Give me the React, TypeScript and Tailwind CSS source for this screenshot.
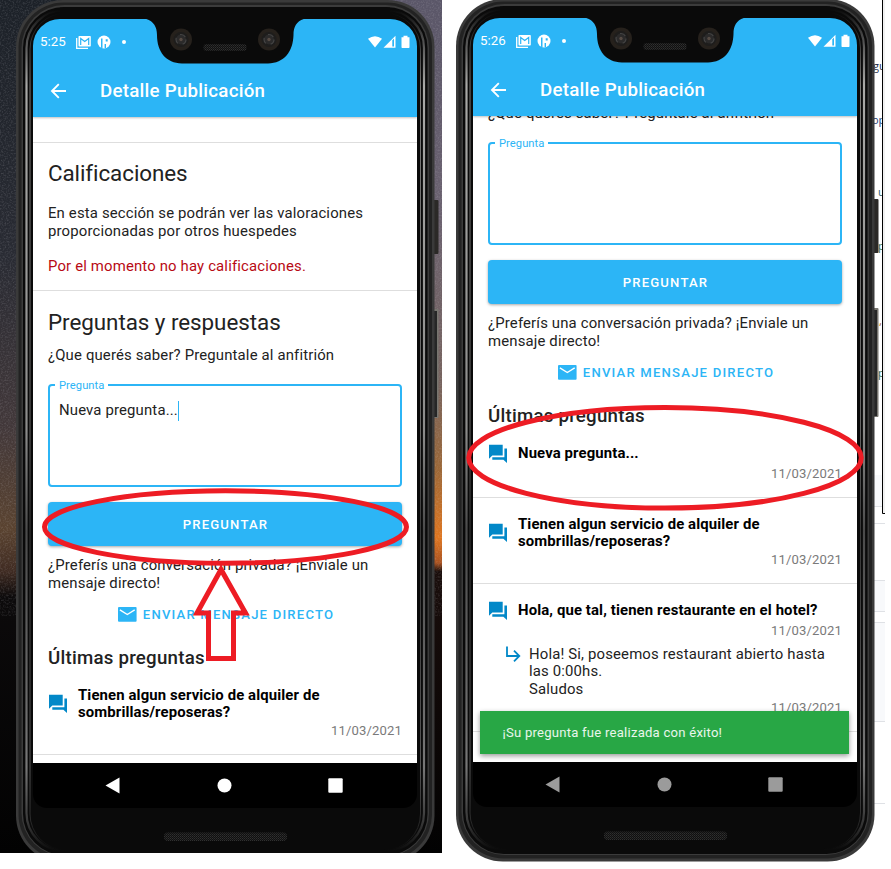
import type { ReactNode } from "react";

/* Phone body: bezel, notch hardware and side keys */
function Bezel({ id }: { id: string }) {
  return (
    <svg className="absolute inset-0" width="424" height="863" viewBox="0 0 424 863" aria-hidden="true">
      <defs>
        <linearGradient id={`${id}-silver`} x1="0" y1="0" x2="0" y2="1">
          <stop offset="0" stopColor="#0a0a0a" />
          <stop offset="0.03" stopColor="#444" />
          <stop offset="0.09" stopColor="#a9a9a7" />
          <stop offset="0.5" stopColor="#8c8c8b" />
          <stop offset="0.62" stopColor="#4b4b4b" />
          <stop offset="0.9" stopColor="#777" />
          <stop offset="0.97" stopColor="#333" />
          <stop offset="1" stopColor="#0a0a0a" />
        </linearGradient>
        <pattern id={`${id}-mesh`} width="2" height="2" patternUnits="userSpaceOnUse">
          <rect width="2" height="2" fill="#101010" />
          <rect width="1" height="1" fill="#303030" />
          <rect x="1" y="1" width="1" height="1" fill="#242424" />
        </pattern>
      </defs>
      <rect x="417" y="200" width="5.5" height="54" rx="1" fill="#2b2927" />
      <rect x="417" y="309" width="5.5" height="109" rx="1" fill="#77756f" />
      <rect x="417" y="311" width="4" height="106" fill="#262626" />
      <rect x="0" y="0" width="418.5" height="862.5" rx="47" fill="#3a3a3a" />
      <rect x="2.5" y="2.5" width="413.5" height="857" rx="45" fill="#222" />
      <rect x="5.5" y="5" width="407.5" height="851" rx="43" fill="#3b3b3b" />
      <rect x="7" y="7" width="404.5" height="848" rx="41" fill="#0a0a0a" />
      <rect x="10.5" y="10" width="397.5" height="841" rx="38" fill="none" stroke={`url(#${id}-silver)`} strokeWidth="2.2" />
      <rect x="14" y="13" width="390.5" height="837" rx="36" fill="#0a0a0a" stroke={`url(#${id}-silver)`} strokeWidth="0.7" />
      <rect x="44" y="7.5" width="330" height="8" fill="#0a0a0a" />
      <rect x="50" y="846" width="318" height="8" fill="#0a0a0a" />
      <rect x="148" y="832.5" width="123" height="8.5" rx="4" fill={`url(#${id}-mesh)`} />
    </svg>
  );
}

function Notch({ id }: { id: string }) {
  return (
    <svg className="absolute left-0 top-0" width="384" height="50" viewBox="0 0 384 50" aria-hidden="true">
      <path d="M108 -1 C119 0 124 6 124 16 C124 33 133 44 149 44.5 H235 C251 44 260 33 260.5 16 C260.5 6 265 0 276 -1 Z" fill="#0a0a0a" />
      {[148, 236].map((x) => (
        <g key={x}>
          <circle cx={x} cy="20.5" r="11" fill="#26211c" />
          <circle cx={x} cy="20.5" r="7.5" fill="#1e1d1c" />
          <circle cx={x} cy="20.5" r="5" fill="#2b2a2a" stroke="#454545" strokeWidth="1.2" strokeDasharray="6 5" />
          <circle cx={x} cy="20.5" r="1.7" fill="#564b44" />
        </g>
      ))}
      <rect x="170.5" y="25" width="43" height="7" rx="3" fill={`url(#${id}-mesh)`} />
    </svg>
  );
}

function StatusBar({ time }: { time: string }) {
  return (
    <div className="flex h-[46px] items-center pl-[7px] pr-[7px] text-white">
      <span className="w-[35.5px] text-[13.3px] leading-4">{time}</span>
      <svg width="15" height="13" viewBox="0 0 15 13">
        <path d="M0.7 2V12.300H12" fill="none" stroke="currentColor" strokeWidth="1.3" />
        <rect x="2.500" y="0" width="12.3" height="10.5" rx="0.8" fill="currentColor" />
        <path d="M4.7 9V2.500L8.700 5.500L12.700 2.500V9" fill="none" stroke="#2cb5f6" strokeWidth="1.2" />
      </svg>
      <svg className="ml-[6px]" width="14" height="14" viewBox="0 0 14 14">
        <circle cx="7" cy="7" r="6.500" fill="currentColor" />
        <path d="M4 3.500H5.500V13.200L4 12.700Z M8.700 4.300H10.700V6.500H8.700Z M7.600 9H9V13H7.600Z" fill="#2cb5f6" />
      </svg>
      <span className="ml-[11px] size-1 rounded-full bg-white" />
      <svg className="ml-auto" width="42" height="14" viewBox="0 0 42 14">
        <path d="M0 3.800Q7 -1.500 14 3.800L7 12.500Z" fill="currentColor" />
        <path d="M15.500 12.700L27.500 0.700V12.700Z" fill="currentColor" />
        <path d="M24.300 5.500V11.500H26V3.500Z" fill="#2cb5f6" />
        <path d="M33.500 2.200H35.500V0.700H39.500V2.200H41.500V12.200Q41.500 13 40.700 13H34.300Q33.500 13 33.500 12.200Z" fill="currentColor" />
      </svg>
    </div>
  );
}

function BackIcon() {
  return (
    <svg width="16" height="16" viewBox="0 0 16 16" fill="none" stroke="currentColor" strokeWidth="1.9" aria-hidden="true">
      <path d="M16 8H2.500M8.800 1.200L2 8L8.800 14.800" />
    </svg>
  );
}

function MailIcon() {
  return (
    <svg width="19" height="15" viewBox="0 0 19 15" aria-hidden="true">
      <rect width="18.600" height="14.800" rx="1" fill="currentColor" />
      <path d="M1.900 2.900L9.300 7.500L16.700 2.900" fill="none" stroke="#fff" strokeWidth="1.4" />
    </svg>
  );
}

function ForumIcon() {
  return (
    <svg width="20" height="20" viewBox="0 0 20 20" className="mr-px mt-[-1px] shrink-0 text-[#0288c8]" fill="currentColor" aria-hidden="true">
      <path d="M1 0.800H14.700V11.500H4.300L1 14.800Z M16.400 4.500H19V19L15.400 15.700H4.300V13.300H16.400Z" />
    </svg>
  );
}

function ReplyIcon() {
  return (
    <svg width="16" height="18" viewBox="0 0 16 18" fill="none" stroke="#0288c8" strokeWidth="1.8" aria-hidden="true">
      <path d="M2 0.500V10H14.500M9 4.700L14.300 10L9 15.300" />
    </svg>
  );
}

function Divider() {
  return <div className="h-px bg-[#dedede]" />;
}

function Ask({ value }: { value?: string }) {
  return (
    <section className="px-[15px]">
      <h2 className="pt-[18px] text-[22.4px] leading-[26px] tracking-[-0.002em]">Preguntas y respuestas</h2>
      <p className="mt-[12px]">¿Que querés saber? Preguntale al anfitrión</p>
      <div className="relative mt-[19px] h-[103px] w-[354px] rounded-[4px] border-2 border-[#2cb5f6] px-[9px] pt-[15px]">
        <span className="absolute left-[5px] top-[-9px] bg-white px-[4px] text-[11.2px] leading-[18px] tracking-[0.004em] text-[#2cb5f6]">Pregunta</span>
        {value && (
          <p className="flex items-center">
            {value}
            <span className="h-[20px] w-[1.5px] bg-[#2cb5f6]" />
          </p>
        )}
      </div>
      <button className="mt-[15px] flex h-[44px] w-[354px] items-center justify-center rounded-[4px] bg-[#2cb5f6] pl-px pt-[2px] text-[13.1px] font-medium tracking-[0.089em] text-white shadow-[0_1px_3px_rgba(0,0,0,0.35)]">
        PREGUNTAR
      </button>
      <p className="mt-[11.5px] w-[354px]">¿Preferís una conversación privada? ¡Enviale un mensaje directo!</p>
      <button className="mt-[12.5px] flex h-[20px] w-[354px] items-center justify-center gap-[6px] pl-[2px] text-[13.1px] font-medium tracking-[0.092em] text-[#2cb5f6]">
        <MailIcon />
        ENVIAR MENSAJE DIRECTO
      </button>
      <h3 className="mt-[22px] text-[18.7px] font-medium leading-[22px] tracking-[0.0125em]">Últimas preguntas</h3>
    </section>
  );
}

type QuestionProps = { text: string; date: string; rowClass: string; reply?: ReactNode };

function Question({ text, date, rowClass, reply }: QuestionProps) {
  return (
    <div>
      <div className={rowClass}>
        <ForumIcon />
        <p className="w-[300px] font-bold tracking-[0.008em] text-black">{text}</p>
      </div>
      <QuestionDate date={date} />
      {reply}
    </div>
  );
}

function QuestionDate({ date }: { date: string }) {
  return <p className="pr-[15px] text-right text-[13.1px] leading-4 tracking-[0.011em] text-[#7a7a7a]">{date}</p>;
}

type PhoneProps = { id: string; time: string; children: ReactNode; navColor: string; className: string };

function Phone({ id, time, children, navColor, className }: PhoneProps) {
  return (
    <div className={className}>
      <Bezel id={id} />
      <div className="relative ml-[17px] mt-[19px] flex h-[789px] w-[384px] flex-col overflow-hidden rounded-t-[27px] rounded-b-[14px] bg-black">
        <header className="relative z-10 h-[98px] shrink-0 bg-[#2cb5f6] shadow-[0_1px_2px_rgba(0,0,0,0.25)]">
          <StatusBar time={time} />
          <div className="flex h-[52px] items-center pl-[17px] text-white">
            <BackIcon />
            <h1 className="ml-[34px] text-[18.7px] font-medium tracking-[0.0135em]">Detalle Publicación</h1>
          </div>
          <Notch id={id} />
        </header>
        <main className="relative h-[646px] shrink-0 overflow-hidden bg-white text-[14.9px] leading-[17.5px] tracking-[0.0105em] text-[#222]">{children}</main>
        <nav className="flex h-[45px] items-center pl-[72px]">
          <svg width="240" height="20" viewBox="0 0 240 20" className={navColor} fill="currentColor">
            <path d="M0.500 9.500L14.500 1.500V17.500Z" />
            <circle cx="119.500" cy="9.500" r="7" />
            <rect x="223.300" y="2.300" width="14.400" height="14.400" rx="1" />
          </svg>
        </nav>
      </div>
    </div>
  );
}

/* Night-to-sunset photograph behind the first phone */
function SunsetBackdrop() {
  return (
    <svg className="absolute inset-0" width="442" height="853" aria-hidden="true">
      <defs>
        <linearGradient id="dusk" x1="0" y1="0" x2="0" y2="1">
          <stop offset="0" stopColor="#1c2128" />
          <stop offset="0.3" stopColor="#292b33" />
          <stop offset="0.5" stopColor="#42383a" />
          <stop offset="0.62" stopColor="#5a4330" />
          <stop offset="0.67" stopColor="#3f2b22" />
          <stop offset="0.7" stopColor="#0c0a0b" />
          <stop offset="1" stopColor="#020202" />
        </linearGradient>
        <linearGradient id="glow" x1="0" y1="0" x2="0" y2="1">
          <stop offset="0" stopColor="#5a5668" />
          <stop offset="0.25" stopColor="#6b6270" />
          <stop offset="0.45" stopColor="#76635e" />
          <stop offset="0.55" stopColor="#9c6838" />
          <stop offset="0.63" stopColor="#df7620" />
          <stop offset="0.66" stopColor="#a95322" />
          <stop offset="0.67" stopColor="#1a0e0c" />
          <stop offset="1" stopColor="#020202" />
        </linearGradient>
        <filter id="grain">
          <feTurbulence type="fractalNoise" baseFrequency="0.6" numOctaves="2" />
          <feColorMatrix values="0 0 0 0 0.8  0 0 0 0 0.8  0 0 0 0 0.85  1.6 0 0 0 -0.7" />
        </filter>
      </defs>
      <rect width="442" height="853" fill="url(#dusk)" />
      <rect x="370" width="72" height="853" fill="url(#glow)" />
      <rect width="442" height="560" filter="url(#grain)" opacity="0.22" />
    </svg>
  );
}

/* Edge of the window that sits behind the second phone */
function WindowEdge() {
  const words = [
    { y: 70, x: 873, t: "gu", c: "#1f2f4a" },
    { y: 124, x: 872, t: "op", c: "#1f3f78" },
    { y: 196, x: 878, t: "u", c: "#2c5a66" },
    { y: 250, x: 878, t: "p", c: "#2d6a50" },
    { y: 325, x: 879, t: ",", c: "#a05a20" },
    { y: 377, x: 878, t: "p", c: "#2d6a50" },
  ];
  return (
    <svg className="absolute left-0 top-0" width="891" height="869" aria-hidden="true">
      {words.map((w) => (
        <text key={w.y} x={w.x} y={w.y} fill={w.c} fontSize="11" fontFamily="Open Sans, sans-serif">{w.t}</text>
      ))}
      <rect x="882" y="0" width="9" height="513" fill="#fff" />
      <rect x="883" y="0" width="2" height="513" fill="#f1f1f1" />
      <path d="M882.500 0V513.500H885" fill="none" stroke="#000" />
      <path d="M870 475H882V506H870ZM870 580H885V611H870ZM870 622H885V721H870Z" fill="#f8f9fb" />
      <path d="M870 506.500H882M870 523.500H885M870 580.500H885M870 611.500H885M870 622.500H885M870 721.500H885M870 803.500H885" stroke="#dfe1e5" />
    </svg>
  );
}

export default function App() {
  return (
    <div className="relative flex h-[869px] w-[891px] overflow-hidden bg-white font-['Roboto',sans-serif]">
      <div className="relative h-[853px] w-[442px] shrink-0 overflow-hidden">
        <SunsetBackdrop />
        <Phone id="left" time="5:25" navColor="text-white" className="relative ml-[16px] flex h-[863px] w-[424px]">
          <div className="h-[25px]" />
          <Divider />
          <section className="h-[147px] px-[15px]">
            <h2 className="pt-[17px] text-[22.4px] leading-[26px] tracking-[-0.003em]">Calificaciones</h2>
            <p className="mt-[19px] w-[354px]">En esta sección se podrán ver las valoraciones proporcionadas por otros huespedes</p>
            <p className="mt-[18px] text-[#b80a14]">Por el momento no hay calificaciones.</p>
          </section>
          <Divider />
          <Ask value="Nueva pregunta..." />
          <Question text="Tienen algun servicio de alquiler de sombrillas/reposeras?" date="11/03/2021" rowClass="mt-[18px] flex items-center gap-[9px] px-[15px] pb-px" />
          <div className="h-[15px]" />
          <Divider />
        </Phone>
      </div>
      <WindowEdge />
      <Phone id="right" time="5:26" navColor="text-[#9b9b9b]" className="relative ml-[14px] mt-[-1px] flex h-[863px] w-[424px] shrink-0">
        <div className="mt-[-67px]">
          <Ask />
          <Question text="Nueva pregunta..." date="11/03/2021" rowClass="mt-[18px] flex items-center gap-[9px] px-[15px] pb-[2px]" />
          <div className="h-[15px]" />
          <Divider />
          <Question text="Tienen algun servicio de alquiler de sombrillas/reposeras?" date="11/03/2021" rowClass="mt-[18px] flex items-center gap-[9px] px-[15px] pb-px" />
          <div className="h-[15px]" />
          <Divider />
          <Question
            text="Hola, que tal, tienen restaurante en el hotel?"
            date="11/03/2021"
            rowClass="mt-[18px] flex items-center gap-[9px] px-[15px] pb-[2px] whitespace-nowrap"
            reply={
              <>
                <div className="mt-[7px] flex gap-[8px] pl-[32px] pb-[2px]">
                  <ReplyIcon />
                  <p className="w-[305px]">
                    Hola! Si, poseemos restaurant abierto hasta las 0:00hs.
                    <br />
                    Saludos
                  </p>
                </div>
                <QuestionDate date="11/03/2021" />
              </>
            }
          />
          <div className="h-[15px]" />
          <Divider />
        </div>
        <div className="absolute bottom-[8px] left-[7px] flex h-[43px] w-[369px] items-center bg-[#28a745] pl-[22.5px] pt-px text-[13.1px] tracking-[0.018em] text-white/90 shadow-[0_2px_5px_rgba(0,0,0,0.4)]">
          ¡Su pregunta fue realizada con éxito!
        </div>
      </Phone>
      <svg className="absolute inset-0" width="891" height="869" fill="none" stroke="#ed1c24" strokeWidth="5" aria-hidden="true">
        <ellipse cx="225.500" cy="527" rx="181" ry="36.200" />
        <path d="M221 569.500L197 613H208.500V658.500H233.500V613H245.500Z" />
        <ellipse cx="665" cy="457.800" rx="196.300" ry="50.300" />
      </svg>
    </div>
  );
}
